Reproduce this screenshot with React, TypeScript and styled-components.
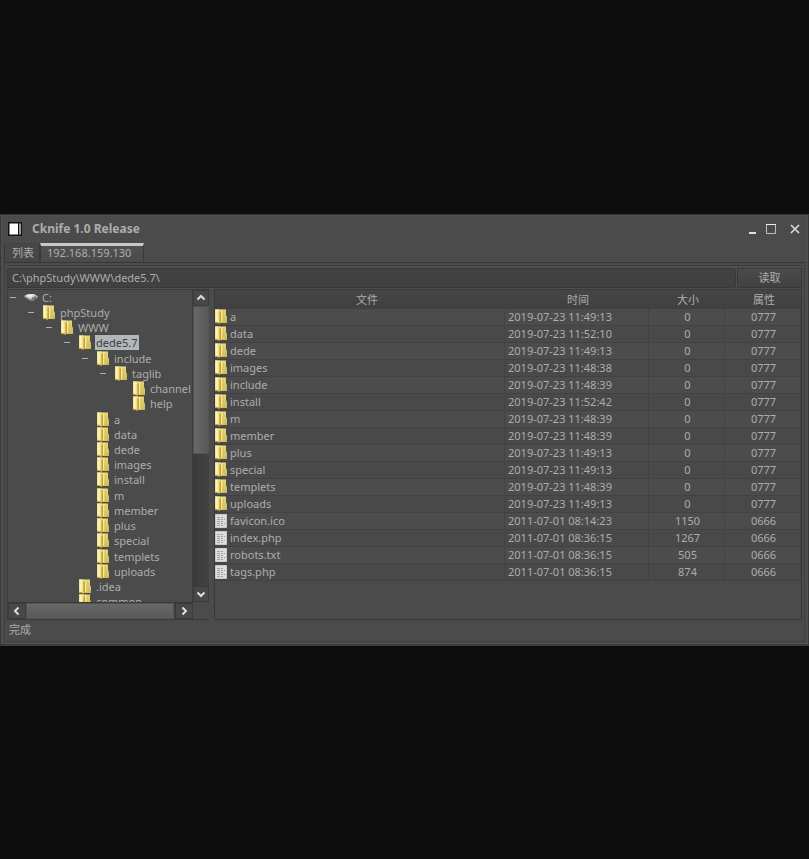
import React, { useState } from "react";
import styled, { createGlobalStyle } from "styled-components";

const GlobalStyle = createGlobalStyle`
  *, *::before, *::after { box-sizing: border-box; }
  body {
    margin: 0;
    background: #0d0d0d;
    color: #adadad;
    font: 11px/15px "Noto Sans", "Noto Sans CJK SC", sans-serif;
  }
  button, input { font: inherit; color: inherit; margin: 0; padding: 0; border: 0; border-radius: 0; background: none; outline: none; }
  svg { display: block; flex: none; }
`;

const Desktop = styled.main`
  min-height: 100vh;
  display: flex;
  flex-direction: column;
  justify-content: center;
`;

const Window = styled.section`
  display: flex;
  flex-direction: column;
  background: #4b4b4b;
  border: 1px solid #393939;
  border-top-color: #333;
  border-bottom: 2px solid #3c3c3c;
  padding: 0 3px 2px;
  box-shadow: inset 0 0 0 1px #505050;
`;

const TitleBar = styled.header`
  display: flex;
  align-items: center;
  height: 28px;
  padding: 0 4px;
  gap: 10px;
`;

const Title = styled.h1`
  flex: 1;
  margin: 0;
  font-size: 12px;
  line-height: 16px;
  font-weight: 700;
`;

const WindowControls = styled.div`
  display: flex;
  gap: 9px;
  & > :last-child { margin-left: 3px; }
`;

const WindowButton = styled.button`
  display: grid;
  place-items: center;
  width: 12px;
  height: 16px;
`;

const Tabs = styled.div`
  display: flex;
  height: 19px;
`;

const Tab = styled.button<{ $active?: boolean }>`
  padding: ${(p) => (p.$active ? "0 12px 2px 6px" : "1px 5px 0 7px")};
  border: 1px solid #3a3a3a;
  border-bottom: 0;
  border-top: ${(p) => (p.$active ? "3px solid #c9c9c9" : "1px solid #454545")};
  background: ${(p) => (p.$active ? "linear-gradient(#515151, #4b4b4b)" : "#474747")};
  line-height: 14px;
`;

const Pane = styled.div`
  display: flex;
  flex-direction: column;
  border: 1px solid #404040;
  border-top-color: #363636;
  padding: 2px 2px 3px;
`;

const Toolbar = styled.form`
  display: flex;
  gap: 1px;
  border-top: 1px solid #3a3a3a;
  padding: 2px 0 1px;
  background: #4f4f4f;
`;

const Address = styled.input`
  flex: 1;
  min-width: 0;
  height: 20px;
  padding: 0 4px 1px;
  border: 1px solid #393939;
  border-radius: 2px;
  background: #414141;
`;

const ReadButton = styled.button`
  width: 65px;
  height: 20px;
  border: 1px solid #383838;
  background: linear-gradient(#4b4b4b, #414141);
`;

const Panels = styled.div`
  display: grid;
  grid-template-columns: 202px minmax(0, 1fr);
  grid-template-rows: minmax(0, 1fr);
  gap: 5px;
  height: 331px;
`;

const TreePanel = styled.div`
  display: grid;
  grid-template-columns: minmax(0, 1fr) 16px;
  grid-template-rows: minmax(0, 1fr) 17px;
  border: 1px solid #3a3a3a;
  border-right: 0;
`;

const TreeView = styled.div`
  overflow: hidden;
  border-right: 1px solid #3d3d3d;
`;

const TreeList = styled.ul`
  display: grid;
  grid-auto-rows: 1fr;
  height: 320px;
  margin: 0;
  padding: 0;
  list-style: none;
`;

const TreeRow = styled.li<{ $depth: number }>`
  display: flex;
  align-items: center;
  padding-left: ${(p) => p.$depth * 18}px;
  min-height: 0;
`;

const Toggle = styled.button<{ $hidden?: boolean }>`
  visibility: ${(p) => (p.$hidden ? "hidden" : "visible")};
  width: 10px;
  height: 11px;
  display: grid;
  place-items: center;
`;

const IconSlot = styled.span`
  width: 20px;
  display: flex;
  justify-content: center;
  margin-left: 3px;
`;

const NodeLabel = styled.span<{ $state?: "selected" | "focus" }>`
  padding: 0 2px 0 1px;
  line-height: 15px;
  white-space: nowrap;
  color: ${(p) => (p.$state === "selected" ? "#3b3d40" : "inherit")};
  background: ${(p) => (p.$state === "selected" ? "#b3b6b9" : "transparent")};
  outline: ${(p) => (p.$state === "focus" ? "1px solid #464646" : "none")};
  outline-offset: -1px;
`;

const ScrollBar = styled.div<{ $horizontal?: boolean }>`
  display: flex;
  flex-direction: ${(p) => (p.$horizontal ? "row" : "column")};
  background: linear-gradient(${(p) => (p.$horizontal ? "180deg" : "90deg")}, #393939, #434343);
  border-top: ${(p) => (p.$horizontal ? "1px solid #383838" : "0")};
`;

const ScrollButton = styled.button<{ $wide?: boolean }>`
  display: grid;
  place-items: center;
  flex: none;
  width: ${(p) => (p.$wide ? 18 : 16)}px;
  height: 16px;
  border: 1px solid #3b3b3b;
  background: #484848;
`;

const Track = styled.div<{ $horizontal?: boolean }>`
  flex: 1;
  display: flex;
  flex-direction: ${(p) => (p.$horizontal ? "row" : "column")};
`;

const Thumb = styled.div<{ $horizontal?: boolean; $share: number }>`
  flex: 0 0 ${(p) => p.$share}%;
  border: 1px solid #545454;
  background: linear-gradient(${(p) => (p.$horizontal ? "180deg" : "90deg")}, #686868, #595959);
`;

const Corner = styled.div`
  background: #4b4b4b;
`;

const FilePanel = styled.div`
  border: 1px solid #393939;
  overflow: hidden;
`;

const FileTable = styled.table`
  width: 100%;
  table-layout: fixed;
  border-collapse: separate;
  border-spacing: 0;
`;

const Column = styled.col<{ $width?: number }>`
  width: ${(p) => (p.$width ? `${p.$width}px` : "auto")};
`;

const HeadCell = styled.th`
  height: 19px;
  padding: 0 0 0 2px;
  font-weight: 400;
  background: linear-gradient(#454545, #404040);
  &:first-child { padding-left: 14px; }
`;

const FileRow = styled.tr`
  background: #4c4c4c;
  &:nth-child(even) { background: #494949; }
`;

const Cell = styled.td<{ $align?: "left" | "center" }>`
  height: 17px;
  padding: 0 1px 0 3px;
  line-height: 16px;
  text-align: ${(p) => p.$align ?? "center"};
  white-space: nowrap;
  border-bottom: 1px solid #424242;
  border-right: 1px solid #424242;
`;

const NameCell = styled(Cell)`
  padding: 0;
  border-right-color: #444;
`;

const FileName = styled.span`
  display: flex;
  align-items: center;
  gap: 3px;
  height: 16px;
`;

const Status = styled.footer`
  padding: 2px 2px 0;
  line-height: 16px;
`;

const FolderIcon = () => (
  <svg width="12" height="15" viewBox="0 0 12 15">
    <defs>
      <linearGradient id="folderBack" x1="0" x2="1">
        <stop offset="0" stopColor="#ecdd84" />
        <stop offset=".35" stopColor="#fdf8bd" />
        <stop offset="1" stopColor="#e2cc66" />
      </linearGradient>
      <linearGradient id="folderFront" x1="0" x2="1" y2="1">
        <stop offset="0" stopColor="#faf2a4" />
        <stop offset="1" stopColor="#d4b240" />
      </linearGradient>
    </defs>
    <path d="M0 .5H11V6L12 8V14H0Z" fill="url(#folderFront)" />
    <path d="M0 .5H5V14.5L0 13.5Z" fill="url(#folderBack)" />
    <path d="M0 12.5L4.5 13.5V14.5L0 13.8Z" fill="#c6a93f" />
    <path d="M4.5 3L6 2V13L4.5 15Z" fill="#bf9f42" />
    <path d="M6.5 2V13" stroke="#f8ec90" strokeWidth="1" />
    <path d="M8.5 2V13" stroke="#dcc35a" strokeWidth="1" />
    <path d="M11 8.5V12" stroke="#9fd0c0" strokeWidth="1" />
  </svg>
);

const FileIcon = () => (
  <svg width="12" height="14" viewBox="0 0 12 14">
    <path d="M.5 .5H11.5V13.5H.5Z" fill="#dedede" stroke="#c8c8c8" />
    <path d="M2 3.5H9M2 5.5H10M2 7.5H8M2 9.5H10M2 11.5H8" stroke="#a0a0a0" strokeDasharray="3 1 2 1" />
  </svg>
);

const DriveIcon = () => (
  <svg width="14" height="9" viewBox="0 0 14 9">
    <path d="M0 3L4 1H10L14 3.5L9 6H5Z" fill="#cfcfcf" />
    <path d="M0 3L5 6H9L14 3.5V4.5L9 8H6L0 4Z" fill="#7b7b7b" />
    <path d="M2 3L6 1.5H10L7 4Z" fill="#f4f4f4" />
    <path d="M8 5.5L12 3.5" stroke="#4c4c4c" />
  </svg>
);

const AppIcon = () => (
  <svg width="14" height="14" viewBox="0 0 14 14">
    <path d="M0 0H14V14H0Z" fill="#111" />
    <path d="M1.5 1.5H10V12.5H1.5Z" fill="#fff" />
    <path d="M11.3 1.5H12.7V12.5H11.3Z" fill="#d5d5d5" />
  </svg>
);

const MinimizeIcon = () => (
  <svg width="12" height="12" viewBox="0 0 12 12">
    <path d="M5 10H12" stroke="#e0e0e0" strokeWidth="2" />
  </svg>
);

const MaximizeIcon = () => (
  <svg width="12" height="12" viewBox="0 0 12 12">
    <path d="M1.5 1.5H10.5V10.5H1.5Z" fill="none" stroke="#bdbdbd" />
    <path d="M1 1.5H11" stroke="#eee" />
  </svg>
);

const CloseIcon = () => (
  <svg width="12" height="12" viewBox="0 0 12 12">
    <path d="M2 2L10 10M10 2L2 10" stroke="#dedede" strokeWidth="1.6" />
  </svg>
);

const chevrons = {
  up: "M1.5 6.5L5 3L8.5 6.5",
  down: "M1.5 3.5L5 7L8.5 3.5",
  left: "M6.5 1.5L3 5L6.5 8.5",
  right: "M3.5 1.5L7 5L3.5 8.5",
};

const Chevron = ({ to }: { to: keyof typeof chevrons }) => (
  <svg width="10" height="10" viewBox="0 0 10 10">
    <path d={chevrons[to]} fill="none" stroke="#dedede" strokeWidth="2" />
  </svg>
);

type Node = { name: string; depth: number; open?: boolean; drive?: boolean; state?: "selected" | "focus" };

const nodes: Node[] = [
  { name: "C:", depth: 0, open: true, drive: true },
  { name: "phpStudy", depth: 1, open: true },
  { name: "WWW", depth: 2, open: true, state: "focus" },
  { name: "dede5.7", depth: 3, open: true, state: "selected" },
  { name: "include", depth: 4, open: true },
  { name: "taglib", depth: 5, open: true },
  { name: "channel", depth: 6 },
  { name: "help", depth: 6 },
  ...["a", "data", "dede", "images", "install", "m", "member", "plus", "special", "templets", "uploads"].map(
    (name) => ({ name, depth: 4 })
  ),
  { name: ".idea", depth: 3 },
  { name: "common", depth: 3 },
];

type Entry = [name: string, time: string, size: number, mode: string];

const files: Entry[] = [
  ["a", "2019-07-23 11:49:13", 0, "0777"],
  ["data", "2019-07-23 11:52:10", 0, "0777"],
  ["dede", "2019-07-23 11:49:13", 0, "0777"],
  ["images", "2019-07-23 11:48:38", 0, "0777"],
  ["include", "2019-07-23 11:48:39", 0, "0777"],
  ["install", "2019-07-23 11:52:42", 0, "0777"],
  ["m", "2019-07-23 11:48:39", 0, "0777"],
  ["member", "2019-07-23 11:48:39", 0, "0777"],
  ["plus", "2019-07-23 11:49:13", 0, "0777"],
  ["special", "2019-07-23 11:49:13", 0, "0777"],
  ["templets", "2019-07-23 11:48:39", 0, "0777"],
  ["uploads", "2019-07-23 11:49:13", 0, "0777"],
  ["favicon.ico", "2011-07-01 08:14:23", 1150, "0666"],
  ["index.php", "2011-07-01 08:36:15", 1267, "0666"],
  ["robots.txt", "2011-07-01 08:36:15", 505, "0666"],
  ["tags.php", "2011-07-01 08:36:15", 874, "0666"],
];

export default function App() {
  const [path, setPath] = useState("C:\\phpStudy\\WWW\\dede5.7\\");
  return (
    <Desktop>
      <GlobalStyle />
      <Window>
        <TitleBar>
          <AppIcon />
          <Title>Cknife 1.0 Release</Title>
          <WindowControls>
            <WindowButton aria-label="Minimize"><MinimizeIcon /></WindowButton>
            <WindowButton aria-label="Maximize"><MaximizeIcon /></WindowButton>
            <WindowButton aria-label="Close"><CloseIcon /></WindowButton>
          </WindowControls>
        </TitleBar>
        <Tabs role="tablist">
          <Tab role="tab" aria-selected={false}>列表</Tab>
          <Tab role="tab" aria-selected $active>192.168.159.130</Tab>
        </Tabs>
        <Pane>
          <Toolbar onSubmit={(e) => e.preventDefault()}>
            <Address aria-label="路径" value={path} onChange={(e) => setPath(e.target.value)} />
            <ReadButton type="submit">读取</ReadButton>
          </Toolbar>
          <Panels>
            <TreePanel>
              <TreeView>
                <TreeList role="tree">
                  {nodes.map((n, i) => (
                    <TreeRow key={i} role="treeitem" $depth={n.depth} aria-selected={n.state === "selected"}>
                      <Toggle $hidden={!n.open} aria-label={`Collapse ${n.name}`}>
                        <svg width="6" height="1"><path d="M0 .5H6" stroke="#b0b0b0" /></svg>
                      </Toggle>
                      <IconSlot>{n.drive ? <DriveIcon /> : <FolderIcon />}</IconSlot>
                      <NodeLabel $state={n.state}>{n.name}</NodeLabel>
                    </TreeRow>
                  ))}
                </TreeList>
              </TreeView>
              <ScrollBar>
                <ScrollButton aria-label="Scroll up"><Chevron to="up" /></ScrollButton>
                <Track><Thumb $share={53} /></Track>
                <ScrollButton aria-label="Scroll down"><Chevron to="down" /></ScrollButton>
              </ScrollBar>
              <ScrollBar $horizontal>
                <ScrollButton $wide aria-label="Scroll left"><Chevron to="left" /></ScrollButton>
                <Track $horizontal><Thumb $horizontal $share={99} /></Track>
                <ScrollButton $wide aria-label="Scroll right"><Chevron to="right" /></ScrollButton>
              </ScrollBar>
              <Corner />
            </TreePanel>
            <FilePanel>
              <FileTable>
                <colgroup>
                  <Column />
                  <Column $width={144} />
                  <Column $width={76} />
                  <Column $width={76} />
                </colgroup>
                <thead>
                  <tr>
                    {["文件", "时间", "大小", "属性"].map((h) => (
                      <HeadCell key={h} scope="col">{h}</HeadCell>
                    ))}
                  </tr>
                </thead>
                <tbody>
                  {files.map(([name, time, size, mode]) => (
                    <FileRow key={name}>
                      <NameCell>
                        <FileName>{name.includes(".") ? <FileIcon /> : <FolderIcon />}{name}</FileName>
                      </NameCell>
                      <Cell $align="left">{time}</Cell>
                      <Cell>{size}</Cell>
                      <Cell>{mode}</Cell>
                    </FileRow>
                  ))}
                </tbody>
              </FileTable>
            </FilePanel>
          </Panels>
          <Status>完成</Status>
        </Pane>
      </Window>
    </Desktop>
  );
}
